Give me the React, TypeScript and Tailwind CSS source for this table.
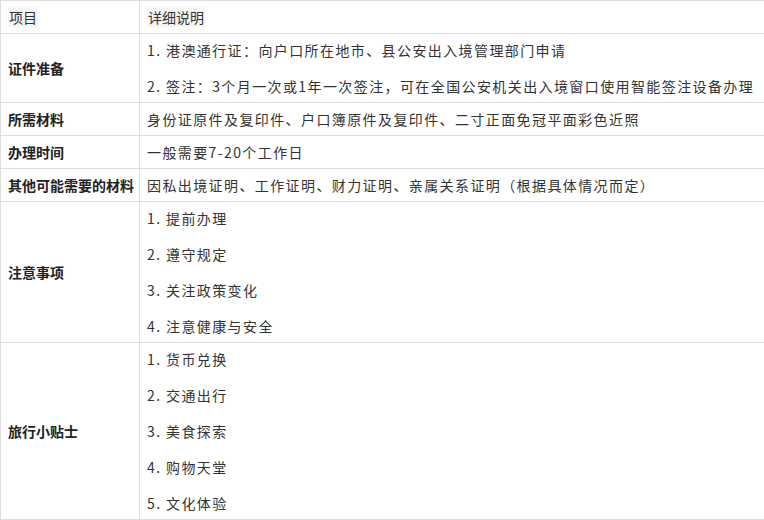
import React from "react";

interface Row {
  label: string;
  items: string[];
}

const rows: Row[] = [
  {
    label: "证件准备",
    items: [
      "1. 港澳通行证：向户口所在地市、县公安出入境管理部门申请",
      "2. 签注：3个月一次或1年一次签注，可在全国公安机关出入境窗口使用智能签注设备办理",
    ],
  },
  {
    label: "所需材料",
    items: ["身份证原件及复印件、户口簿原件及复印件、二寸正面免冠平面彩色近照"],
  },
  { label: "办理时间", items: ["一般需要7-20个工作日"] },
  {
    label: "其他可能需要的材料",
    items: ["因私出境证明、工作证明、财力证明、亲属关系证明（根据具体情况而定）"],
  },
  {
    label: "注意事项",
    items: ["1. 提前办理", "2. 遵守规定", "3. 关注政策变化", "4. 注意健康与安全"],
  },
  {
    label: "旅行小贴士",
    items: ["1. 货币兑换", "2. 交通出行", "3. 美食探索", "4. 购物天堂", "5. 文化体验"],
  },
];

export default function App() {
  return (
    <div
      className="bg-white w-[764px] h-[520px] overflow-hidden text-[14px] leading-[18px] text-[#333]"
      style={{ fontFamily: '"Noto Sans CJK SC", "Noto Sans", sans-serif' }}
    >
      <table className="border-collapse table-fixed w-[780px]">
        <colgroup>
          <col className="w-[139px]" />
          <col />
        </colgroup>
        <thead>
          <tr>
            <th className="border border-[#ddd] px-[7px] py-[7px] text-left font-normal align-middle">
              <span className="bg-[#f5f5f5] px-px">项目</span>
            </th>
            <th className="border border-[#ddd] px-[7px] py-[7px] text-left font-normal align-middle">
              <span className="bg-[#f5f5f5] px-px">详细说明</span>
            </th>
          </tr>
        </thead>
        <tbody>
          {rows.map((row) => (
            <tr key={row.label}>
              <td className="border border-[#ddd] px-[7px] py-[7px] font-bold text-[#222] align-middle whitespace-nowrap">
                {row.label}
              </td>
              <td className="border border-[#ddd] px-[7px] py-[7px] align-middle tracking-[1.4px] whitespace-nowrap">
                {row.items.map((item, i) => (
                  <div key={i} className={i > 0 ? "mt-[18px]" : ""}>
                    {item}
                  </div>
                ))}
              </td>
            </tr>
          ))}
        </tbody>
      </table>
    </div>
  );
}
